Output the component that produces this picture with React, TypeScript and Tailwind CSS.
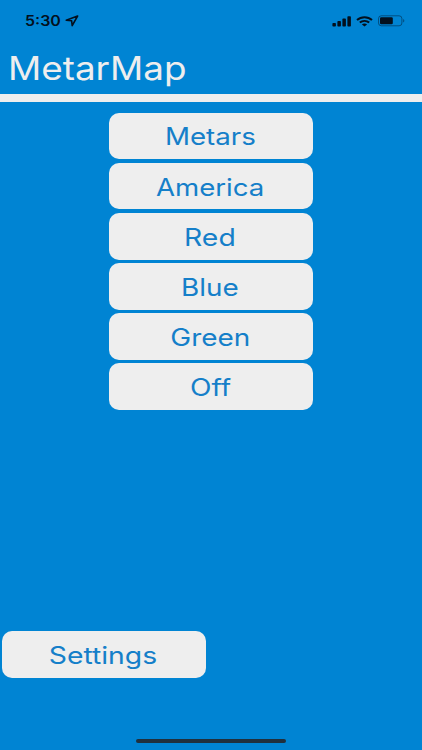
import React from "react";

type ButtonProps = {
    label: string;
    textClass: string;
};

const modes: ButtonProps[] = [
    { label: "Metars", textClass: "scale-x-[1.155]" },
    { label: "America", textClass: "scale-x-[1.15]" },
    { label: "Red", textClass: "scale-x-[1.18]" },
    { label: "Blue", textClass: "scale-x-[1.16]" },
    { label: "Green", textClass: "scale-x-[1.165]" },
    { label: "Off", textClass: "scale-x-[1.17]" },
];

const MenuButton = ({ label, textClass }: ButtonProps) => {
    return (
        <button className="flex h-[46.8px] w-[204px] shrink-0 items-center justify-center rounded-[10px] bg-[#eeeeee] pt-[3px] pr-[1.5px] text-2xl text-[#157fc9]">
            <span className={textClass}>{label}</span>
        </button>
    );
};

const StatusBar = () => {
    return (
        <div className="flex h-[42px] shrink-0 items-center justify-between pr-[17px] pl-[25px] text-[#03101e]">
            <div className="flex items-center">
                <span className="w-9 origin-left scale-x-[1.14] text-sm font-semibold">
                    5:30
                </span>
                <svg width="14" height="12" viewBox="0 0 14 12" className="ml-1">
                    <path
                        d="M12.6 1 1.2 5.2l5.4.5.6 4.9z"
                        fill="none"
                        stroke="currentColor"
                        strokeWidth="1.6"
                        strokeLinejoin="round"
                    />
                </svg>
            </div>
            <div className="flex items-center gap-[5px]">
                <svg width="19" height="11" viewBox="0 0 19 11" fill="currentColor">
                    <rect x="0.4" y="7" width="3.5" height="3.5" rx="0.8" />
                    <rect x="5.4" y="5" width="3.5" height="5.5" rx="0.8" />
                    <rect x="10.4" y="2.6" width="3.5" height="7.9" rx="0.8" />
                    <rect x="15.4" y="0.3" width="3.5" height="10.2" rx="0.8" />
                </svg>
                <svg width="17" height="11" viewBox="0 0 17 11">
                    <g fill="none" stroke="currentColor" strokeWidth="2">
                        <path d="M1 4.1C5.2.3 11.8.3 16 4.1" />
                        <path d="M3.8 6.6c2.7-2.3 6.7-2.3 9.4 0" />
                    </g>
                    <path d="M5.9 8.4c1.5-1.2 3.7-1.2 5.2 0L8.5 10.6z" fill="currentColor" />
                </svg>
                <svg width="27" height="12" viewBox="0 0 27 12">
                    <rect
                        x="0.5"
                        y="0.8"
                        width="23.4"
                        height="10"
                        rx="2.8"
                        fill="none"
                        stroke="currentColor"
                        strokeOpacity="0.45"
                    />
                    <rect x="2" y="2.3" width="12.8" height="7" rx="1.2" fill="currentColor" />
                    <path d="M25.2 4.1c1.5.5 1.5 2.9 0 3.4z" fill="currentColor" fillOpacity="0.5" />
                </svg>
            </div>
        </div>
    );
};

const App = () => {
    return (
        <div className="flex h-[750px] w-[422px] flex-col overflow-hidden bg-[#0084d3] font-['Inter','Liberation_Sans',sans-serif]">
            <StatusBar />
            <header className="flex h-[60px] shrink-0 items-center border-b-8 border-[#eeeeee] pt-0.5 pl-2">
                <h1 className="origin-left scale-x-[1.15] text-[32px] text-[#eeeeee]">
                    MetarMap
                </h1>
            </header>
            <main className="flex flex-1 flex-col items-center gap-[3.4px] pt-[10.5px]">
                {modes.map((mode) => (
                    <MenuButton key={mode.label} {...mode} />
                ))}
            </main>
            <footer className="flex h-[119.2px] shrink-0 flex-col justify-between pb-[7px]">
                <div className="pl-0.5">
                    <MenuButton label="Settings" textClass="scale-x-[1.18]" />
                </div>
                <div className="h-1 w-[150px] self-center rounded-full bg-[#20303d]" />
            </footer>
        </div>
    );
};

export default App;
